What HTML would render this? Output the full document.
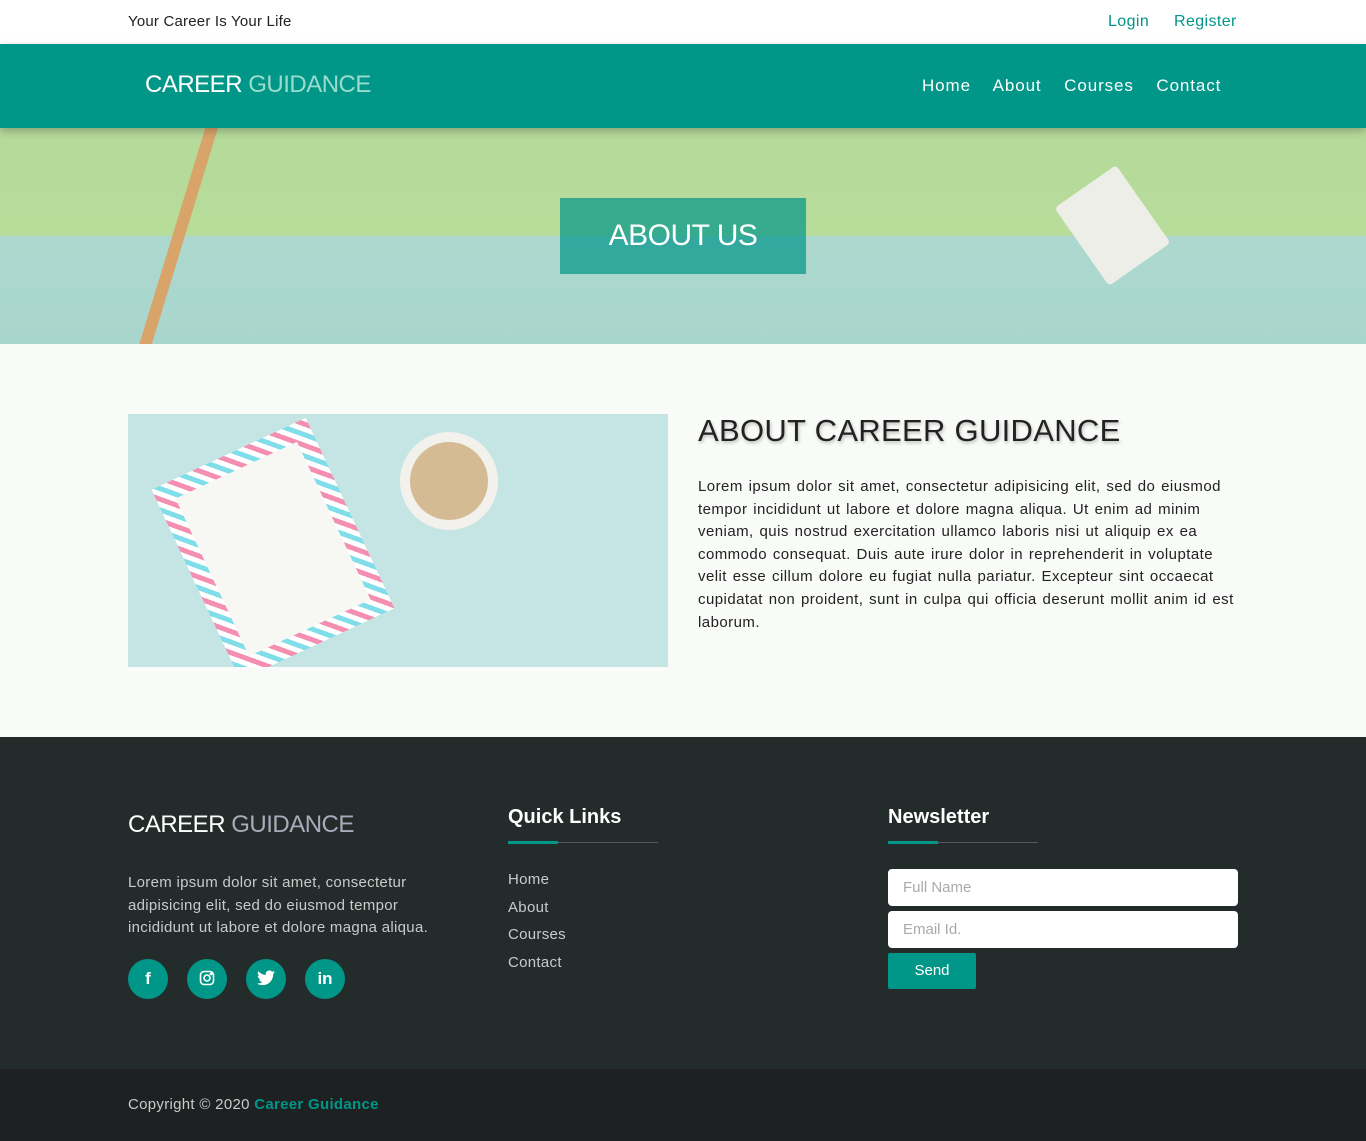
<!DOCTYPE html>
<html><head><meta charset="utf-8"><style>
*{margin:0;padding:0;box-sizing:border-box}
body{width:1366px;height:1141px;font-family:"Liberation Sans",sans-serif;background:#f9fbf8;position:relative;overflow:hidden}
.a{position:absolute}
.top{height:44px;background:#fff}
.nav{top:44px;left:0;width:1366px;height:84px;background:#009688;box-shadow:0 3px 8px rgba(0,0,0,.25);z-index:2}
.hero{top:128px;left:0;width:1366px;height:216px;background:linear-gradient(#b5d99a 0,#b8dc9a 108px,#acd8cf 108px,#a9d6cc 216px);overflow:hidden}
.foot{top:737px;left:0;width:1366px;height:332px;background:#232b2b}
.copy{top:1069px;left:0;width:1366px;height:72px;background:#1d2121}
.fl a{display:block;color:#c7cccb;font-size:15px;line-height:27.6px;letter-spacing:.3px}
.soc{width:40px;height:40px;border-radius:50%;background:#009688;color:#fff;font-weight:bold;font-size:17px;text-align:center;line-height:40px;top:959px}
.soc svg{margin-top:11px}
.inp{background:#fff;border-radius:4px;height:37px;width:350px;left:888px;color:#aaa;font-size:15px;padding:10px 15px}
</style></head><body>
<div class="a top" style="width:1366px"></div>
<div class="a" style="left:128px;top:13px;font-size:15px;color:#222;letter-spacing:.2px">Your Career Is Your Life</div>
<div class="a" style="left:1108px;top:13px;font-size:16px;color:#009688;letter-spacing:.4px">Login</div>
<div class="a" style="left:1174px;top:13px;font-size:16px;color:#009688;letter-spacing:.4px">Register</div>
<div class="a nav">
<div class="a" style="left:145px;top:27px;font-size:24px;color:#fff;letter-spacing:-.5px">CAREER <span style="color:#9adccc">GUIDANCE</span></div>
<div class="a" style="left:922px;top:32px;font-size:17px;color:#fff;word-spacing:17px;letter-spacing:.9px">Home About Courses Contact</div>
</div>
<div class="a hero">
<div class="a" style="left:172px;top:-10px;width:12px;height:240px;background:#d8a46a;transform:rotate(17deg)"></div>
<div class="a" style="left:1075px;top:50px;width:75px;height:95px;background:#eeeee8;transform:rotate(-35deg);border-radius:4px"></div>
<div class="a" style="left:560px;top:70px;width:246px;height:76px;background:rgba(0,150,136,.7);color:#fff;font-size:30px;text-align:center;line-height:76px;letter-spacing:-.5px">ABOUT US</div>
</div>
<div class="a" style="left:128px;top:414px;width:540px;height:253px;background:#c4e5e3;overflow:hidden">
<div class="a" style="left:60px;top:30px;width:170px;height:210px;background:repeating-linear-gradient(45deg,#f48fb1 0 5px,#fff 5px 10px,#80deea 10px 15px,#fff 15px 20px);transform:rotate(-25deg)"></div>
<div class="a" style="left:78px;top:48px;width:134px;height:174px;background:#f7f7f4;transform:rotate(-25deg)"></div>
<div class="a" style="left:272px;top:18px;width:98px;height:98px;border-radius:50%;background:#f3f1ec"></div>
<div class="a" style="left:282px;top:28px;width:78px;height:78px;border-radius:50%;background:#d4bb94"></div>
</div>
<div class="a" style="left:698px;top:413px;font-size:31px;color:#222;letter-spacing:.3px;text-shadow:1px 2px 3px rgba(0,0,0,.25)">ABOUT CAREER GUIDANCE</div>
<div class="a" style="left:698px;top:476px;width:545px;font-size:15px;line-height:22.6px;color:#222;letter-spacing:.45px;word-spacing:1.2px">Lorem ipsum dolor sit amet, consectetur adipisicing elit, sed do eiusmod tempor incididunt ut labore et dolore magna aliqua. Ut enim ad minim veniam, quis nostrud exercitation ullamco laboris nisi ut aliquip ex ea commodo consequat. Duis aute irure dolor in reprehenderit in voluptate velit esse cillum dolore eu fugiat nulla pariatur. Excepteur sint occaecat cupidatat non proident, sunt in culpa qui officia deserunt mollit anim id est laborum.</div>
<div class="a foot"></div>
<div class="a" style="left:128px;top:811px;font-size:24px;color:#fff;letter-spacing:-.5px">CAREER <span style="color:#aab">GUIDANCE</span></div>
<div class="a" style="left:128px;top:872px;width:340px;font-size:15px;line-height:22.6px;color:#c7cccb;letter-spacing:.3px">Lorem ipsum dolor sit amet, consectetur adipisicing elit, sed do eiusmod tempor incididunt ut labore et dolore magna aliqua.</div>
<div class="a soc" style="left:128px">f</div>
<div class="a soc" style="left:187px"><svg width="16" height="16" viewBox="0 0 16 16" fill="none" stroke="#fff" stroke-width="1.6"><rect x="1.5" y="1.5" width="13" height="13" rx="3.5"/><circle cx="8" cy="8" r="3"/><circle cx="12" cy="4" r=".6" fill="#fff"/></svg></div>
<div class="a soc" style="left:246px"><svg width="18" height="16" viewBox="0 0 24 20" fill="#fff"><path d="M24 2.4a10 10 0 0 1-2.8.8A5 5 0 0 0 23.3.4a10 10 0 0 1-3.1 1.2A4.9 4.9 0 0 0 11.8 6 14 14 0 0 1 1.7.9a4.9 4.9 0 0 0 1.5 6.6A4.9 4.9 0 0 1 1 6.9a4.9 4.9 0 0 0 3.9 4.9 5 5 0 0 1-2.2.1 4.9 4.9 0 0 0 4.6 3.4A9.9 9.9 0 0 1 0 17.3 14 14 0 0 0 7.5 19.5c9.1 0 14-7.5 14-14v-.6A10 10 0 0 0 24 2.4z"/></svg></div>
<div class="a soc" style="left:305px">in</div>
<div class="a" style="left:508px;top:806px;font-size:20px;color:#fff;font-weight:bold">Quick Links</div>
<div class="a" style="left:508px;top:842px;width:150px;height:1px;background:#556"></div>
<div class="a" style="left:508px;top:841px;width:50px;height:3px;background:#009688"></div>
<div class="a fl" style="left:508px;top:866px"><a>Home</a><a>About</a><a>Courses</a><a>Contact</a></div>
<div class="a" style="left:888px;top:806px;font-size:20px;color:#fff;font-weight:bold">Newsletter</div>
<div class="a" style="left:888px;top:842px;width:150px;height:1px;background:#556"></div>
<div class="a" style="left:888px;top:841px;width:50px;height:3px;background:#009688"></div>
<div class="a inp" style="top:869px">Full Name</div>
<div class="a inp" style="top:911px">Email Id.</div>
<div class="a" style="left:888px;top:953px;width:88px;height:36px;background:#009688;color:#fff;font-size:15px;text-align:center;line-height:36px;border-radius:2px">Send</div>
<div class="a copy"></div>
<div class="a" style="left:128px;top:1096px;font-size:15px;color:#c7cccb;letter-spacing:.3px">Copyright © 2020 <span style="color:#009688;font-weight:bold">Career Guidance</span></div>
</body></html>
